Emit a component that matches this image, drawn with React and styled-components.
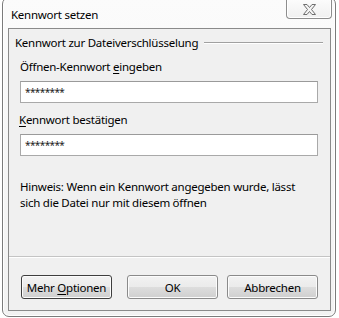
import React from 'react';
import styled, { createGlobalStyle } from 'styled-components';

const Global = createGlobalStyle`
  html, body {
    margin: 0;
    padding: 0;
    background: #ffffff;
    overflow: hidden;
  }
  body {
    font-family: "Noto Sans", "Segoe UI", sans-serif;
    font-size: 11.5px;
    letter-spacing: -0.25px;
    color: #000;
  }
`;

const Window = styled.div`
  box-sizing: border-box;
  width: 334px;
  height: 320px;
  margin: -3px 0 0 2px;
  border: 1px solid #7b7b7b;
  border-radius: 7px;
  background: linear-gradient(#fbfbfb, #f2f2f2);
  box-shadow: inset 0 0 0 1px #ffffff;
  display: flex;
  flex-direction: column;
  padding: 0 4px 0 5px;
`;

const TitleBar = styled.div`
  height: 30px;
  display: flex;
  align-items: flex-start;
  justify-content: space-between;
`;

const Title = styled.span`
  margin-top: 9px;
  margin-left: 3px;
  line-height: 16px;
`;

const CloseButton = styled.div`
  box-sizing: border-box;
  width: 46px;
  height: 21px;
  margin-right: -1px;
  border: 1px solid #8d8d8d;
  border-top: none;
  border-radius: 0 0 4px 4px;
  background: linear-gradient(#fdfdfd, #f0f0f0);
  box-shadow: inset 0 0 0 1px #ffffff;
  display: flex;
  align-items: center;
  justify-content: center;
  padding-top: 2px;
`;

const Client = styled.div`
  box-sizing: border-box;
  height: 283px;
  border: 1px solid #8a8a8a;
  background: #f0f0f0;
  display: flex;
  flex-direction: column;
`;

const Body = styled.div`
  flex: 1;
  padding: 6px 7px 0 6px;
`;

const GroupHeading = styled.div`
  display: flex;
  align-items: center;
  gap: 6px;
  line-height: 16px;
  &::after {
    content: '';
    flex: 1;
    border-top: 1px solid #a0a0a0;
    border-bottom: 1px solid #ffffff;
  }
`;

const Fields = styled.div`
  padding: 8px 0 0 5px;
`;

const Label = styled.div`
  line-height: 16px;
  margin-top: ${(p) => p.$top || 0}px;
  margin-left: ${(p) => p.$shift || 0}px;
  u {
    text-decoration-thickness: 1px;
    text-underline-offset: 2px;
  }
`;

const Input = styled.div`
  box-sizing: border-box;
  width: 298px;
  height: 22px;
  margin-top: 6px;
  border: 1px solid #a9a9a9;
  border-top-color: #9a9a9a;
  background: #ffffff;
  padding-left: 4px;
  display: flex;
  align-items: center;
  font-size: 10px;
  letter-spacing: -0.6px;
  color: #222;
`;

const Hint = styled.p`
  margin: 23px 0 0;
  line-height: 16px;
  width: 292px;
`;

const Footer = styled.div`
  border-top: 1px solid #c4c4c4;
  box-shadow: inset 0 1px 0 #ffffff;
  padding: 18px 0 11px 12px;
  display: flex;
`;

const Button = styled.button`
  box-sizing: border-box;
  width: 91px;
  height: 24px;
  margin-left: ${(p) => p.$gap || 0}px;
  padding: 0;
  font-family: inherit;
  font-size: 11.5px;
  letter-spacing: -0.25px;
  color: #000;
  border: 1px solid ${(p) => (p.$focused ? '#3e3e3e' : '#8a8a8a')};
  border-radius: 3px;
  background: linear-gradient(#f2f2f2 0%, #ebebeb 50%, #dddddd 51%, #cfcfcf 100%);
  box-shadow: inset 0 0 0 1px #fcfcfc;
  u {
    text-decoration-thickness: 1px;
    text-underline-offset: 2px;
  }
`;

const CloseIcon = () => (
  <svg width="15" height="11" viewBox="0 0 15 11">
    <path
      d="M1.5 0.5 H5 L7.5 3.5 L10 0.5 H13.5 L9.5 5.5 L13.5 10.5 H10 L7.5 7.5 L5 10.5 H1.5 L5.5 5.5 Z"
      fill="#f4f4f4"
      stroke="#6f6f6f"
      strokeWidth="1"
      strokeLinejoin="round"
    />
  </svg>
);

export default function App() {
  return (
    <>
      <Global />
      <Window>
        <TitleBar>
          <Title>Kennwort setzen</Title>
          <CloseButton>
            <CloseIcon />
          </CloseButton>
        </TitleBar>
        <Client>
          <Body>
            <GroupHeading>Kennwort zur Dateiverschlüsselung</GroupHeading>
            <Fields>
              <Label>
                Öffnen-Kennwort <u>e</u>ingeben
              </Label>
              <Input>********</Input>
              <Label $top={9} $shift={-1}>
                <u>K</u>ennwort bestätigen
              </Label>
              <Input>********</Input>
              <Hint>
                Hinweis: Wenn ein Kennwort angegeben wurde, lässt sich die Datei nur mit diesem öffnen
              </Hint>
            </Fields>
          </Body>
          <Footer>
            <Button $focused>
              Mehr <u>O</u>ptionen
            </Button>
            <Button $gap={15}>OK</Button>
            <Button $gap={9}>Abbrechen</Button>
          </Footer>
        </Client>
      </Window>
    </>
  );
}
